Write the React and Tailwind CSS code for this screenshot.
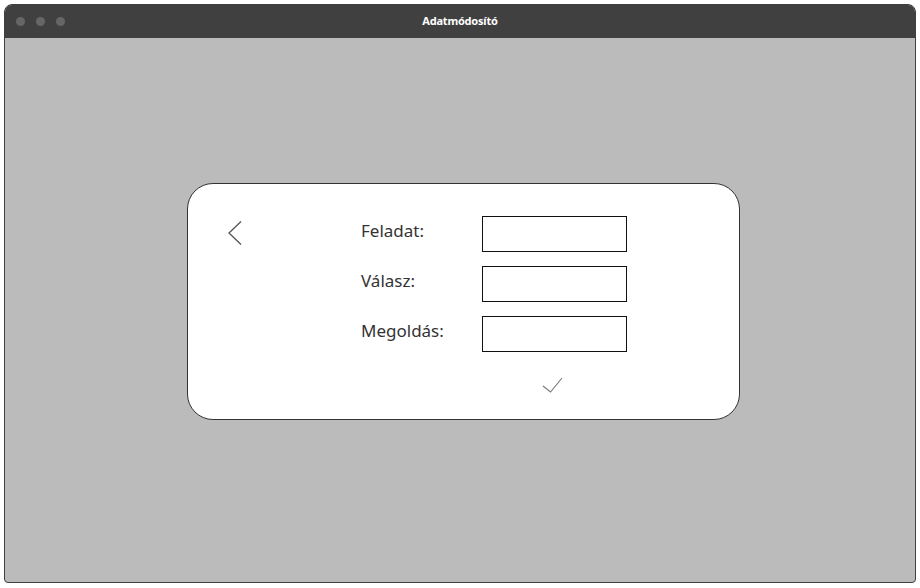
export default function App() {
  return (
    <div className="w-[920px] h-[588px] bg-white pt-[4px] pl-[4px]" style={{ fontFamily: '"Noto Sans", "Open Sans", sans-serif' }}>
      <div className="w-[912px] h-[579px] flex flex-col rounded-t-[8px] rounded-b-[4px] overflow-hidden border border-[#3f3f3f] bg-[#bbbbbb]">
        <div className="h-[33px] bg-[#404040] flex items-center relative shrink-0">
          <div className="flex gap-[11px] pl-[11px]">
            <span className="w-[9px] h-[9px] rounded-full bg-[#666666]" />
            <span className="w-[9px] h-[9px] rounded-full bg-[#666666]" />
            <span className="w-[9px] h-[9px] rounded-full bg-[#666666]" />
          </div>
          <div className="absolute inset-0 flex items-center justify-center text-white text-[11px] font-bold tracking-[-0.2px]">Adatmódosító</div>
        </div>
        <div className="flex-1 pt-[145px] pl-[182px]">
          <div className="w-[553px] h-[237px] bg-white border border-[#333333] rounded-[26px] flex pl-[39px] pt-[32px]">
            <div className="w-[134px] shrink-0 pt-[4px]">
              <svg width="16" height="26" viewBox="0 0 16 26" fill="none">
                <path d="M14 1.5 L2 13 L14 24.5" stroke="#555555" strokeWidth="1.3" />
              </svg>
            </div>
            <div className="flex flex-col gap-[14px]">
              {["Feladat:", "Válasz:", "Megoldás:"].map((l) => (
                <div key={l} className="flex items-center h-[36px]">
                  <div className="w-[121px] text-[17px] text-[#333333] -mt-[6px]">{l}</div>
                  <div className="w-[145px] h-[36px] border-[1.5px] border-[#111111] bg-white" />
                </div>
              ))}
              <div className="pl-[181px] mt-[11px]">
                <svg width="22" height="18" viewBox="0 0 22 18" fill="none">
                  <path d="M1 9 L8.5 15 L20 1" stroke="#777777" strokeWidth="1.1" />
                </svg>
              </div>
            </div>
          </div>
        </div>
      </div>
    </div>
  );
}
